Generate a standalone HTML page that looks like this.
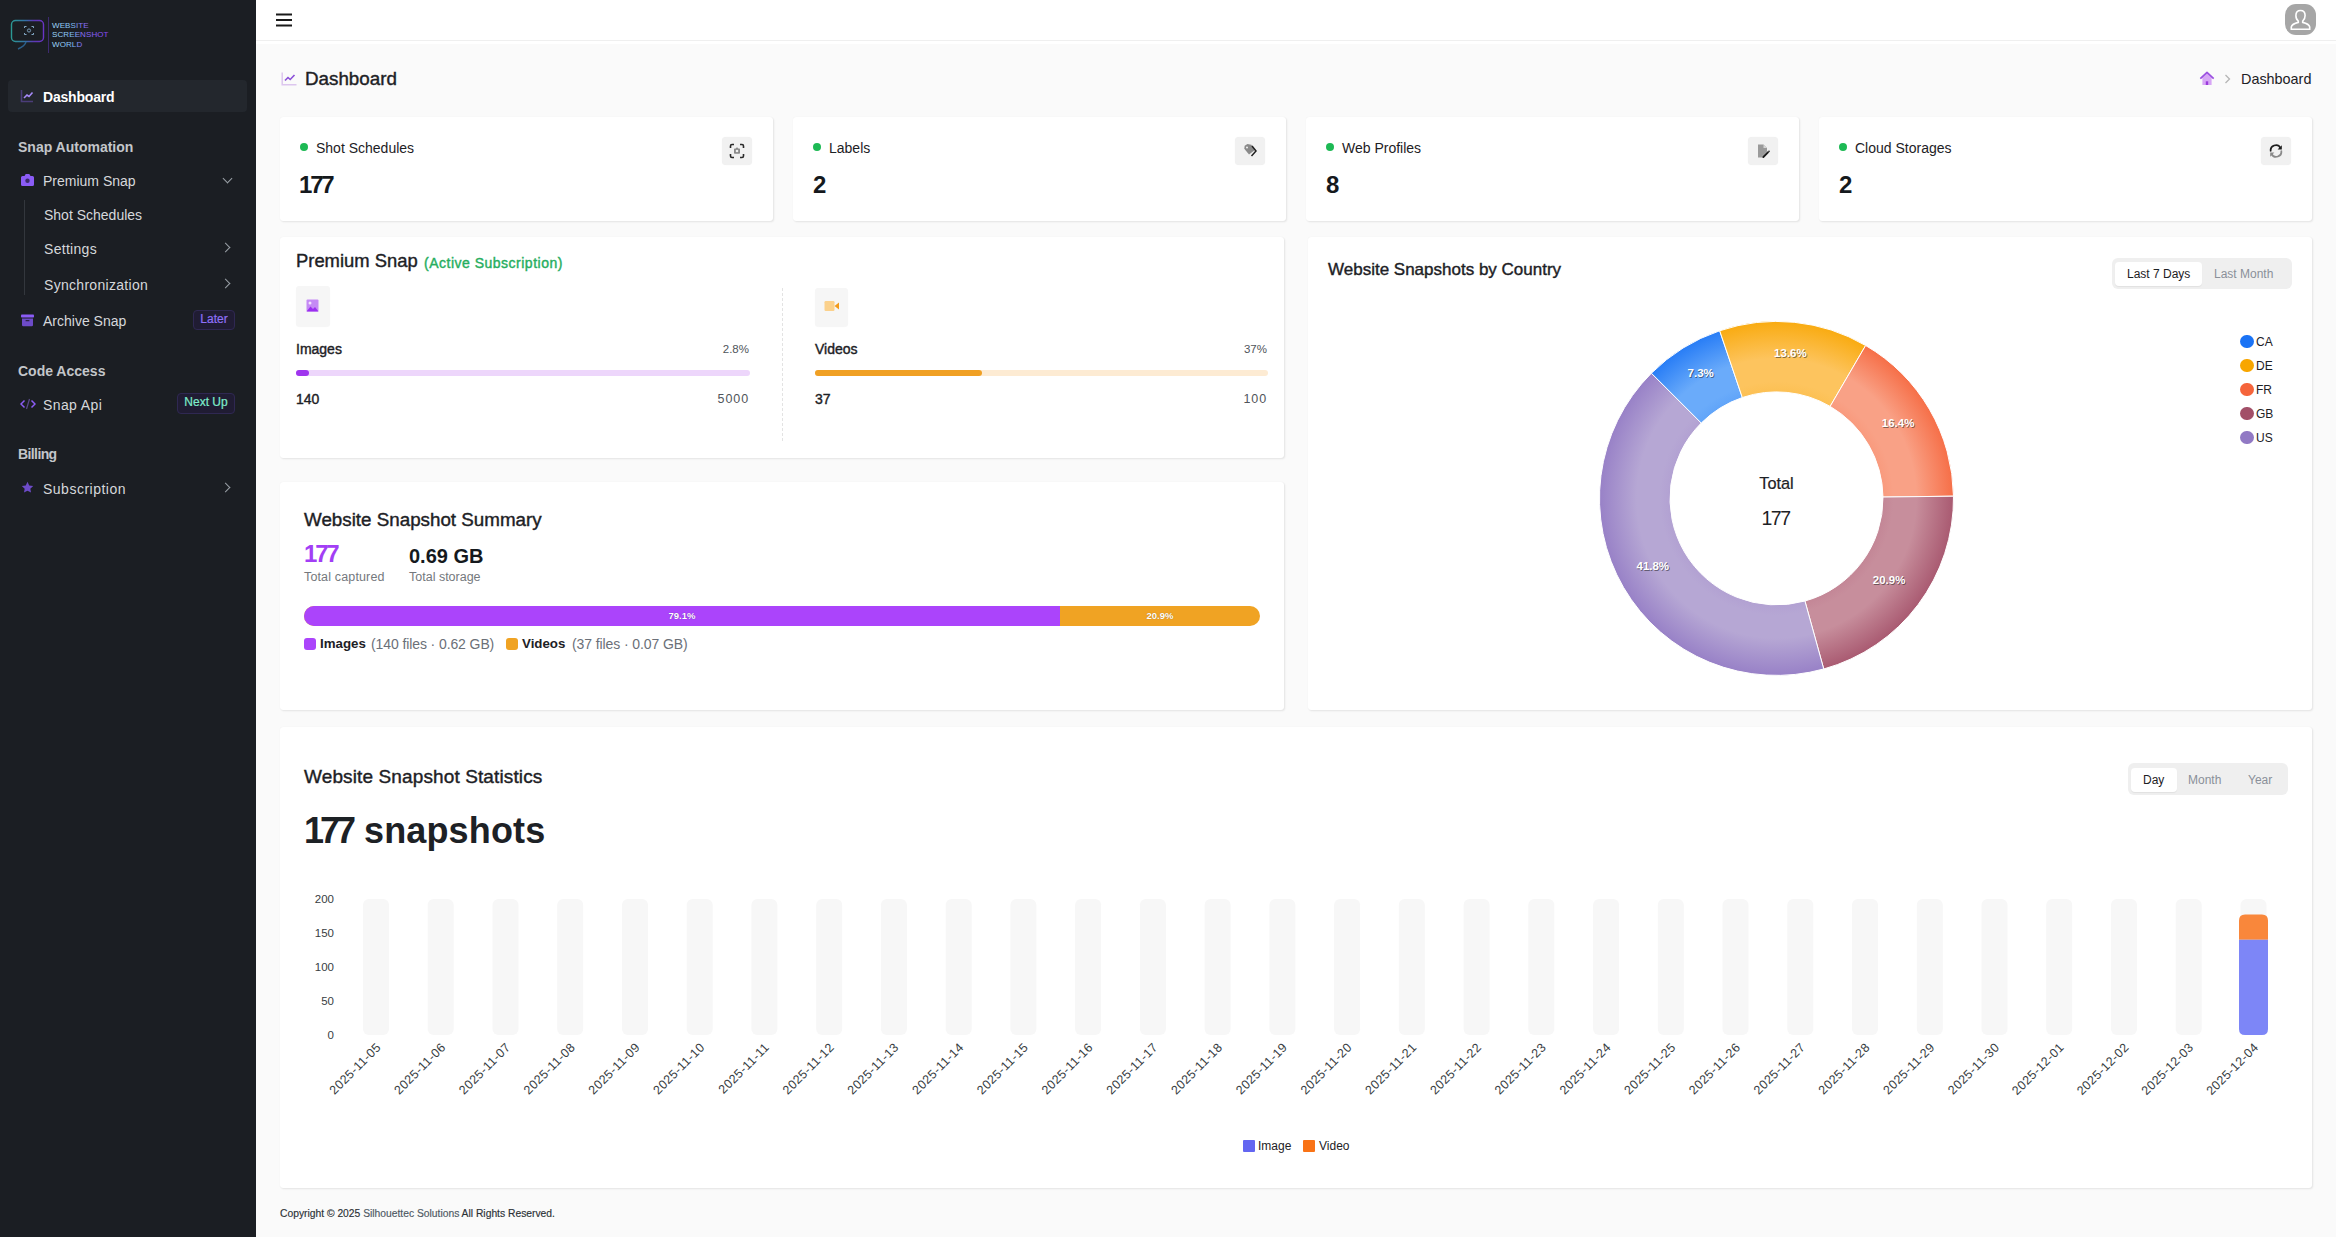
<!DOCTYPE html>
<html><head><meta charset="utf-8">
<style>
*{box-sizing:border-box;margin:0;padding:0}
html,body{width:2336px;height:1237px;overflow:hidden}
body{font-family:"Liberation Sans",sans-serif;background:#fafafa;color:#1f2328;position:relative}
.abs{position:absolute;white-space:nowrap}
.med{-webkit-text-stroke:0.4px currentColor}
#sb{position:absolute;left:0;top:0;width:256px;height:1237px;background:#1b1e23}
#hd{position:absolute;left:256px;top:0;width:2080px;height:44px;background:#fff;border-top:40px solid #fff;box-shadow:inset 0 -3px 0 #fff}
#hdl{position:absolute;left:256px;top:40px;width:2080px;height:1px;background:#efefef}
.card{position:absolute;background:#fff;border-radius:3px;box-shadow:1px 1px 2px rgba(0,0,0,0.09),0 0 1px rgba(0,0,0,0.07)}
.sbi{position:absolute;left:43px;font-size:14px;color:#d6d8db;line-height:16px;white-space:nowrap}
.sbh{position:absolute;left:18px;font-size:14px;color:#c3c6ca;font-weight:700;line-height:16px;white-space:nowrap}
.chev{position:absolute;left:224px;width:7px;height:7px;border-right:1.3px solid #9aa0a6;border-bottom:1.3px solid #9aa0a6}
.badge{position:absolute;height:18px;font-size:12px;line-height:18px;border-radius:4px;text-align:center;white-space:nowrap}
</style></head><body>
<div id="sb">
<svg class="abs" style="left:0;top:0" width="256" height="64" viewBox="0 0 256 64">
 <defs>
  <linearGradient id="lg1" x1="0" y1="0" x2="1" y2="0"><stop offset="0" stop-color="#2fb7b0"/><stop offset="0.45" stop-color="#3b82c6"/><stop offset="0.7" stop-color="#6d3fd8"/><stop offset="1" stop-color="#7c3aed"/></linearGradient>
  <linearGradient id="lg2" gradientUnits="userSpaceOnUse" x1="52" y1="0" x2="108" y2="0"><stop offset="0" stop-color="#a6e2fb"/><stop offset="0.38" stop-color="#7ec0f6"/><stop offset="0.52" stop-color="#8a72f6"/><stop offset="1" stop-color="#8a45f2"/></linearGradient>
 </defs>
 <rect x="11.5" y="20.5" width="32" height="21" rx="4" fill="none" stroke="url(#lg1)" stroke-width="1.4" opacity="0.8"/>
 <path d="M26 42 Q25 46 18 49" fill="none" stroke="#2b5f8a" stroke-width="1.4"/>
 <path d="M24.5 28v-1.5h2M31.5 26.5h2v1.5M33.5 33v1.5h-2M26.5 34.5h-2V33" fill="none" stroke="#8fb8d8" stroke-width="0.9"/>
 <circle cx="29" cy="30.5" r="1.6" fill="none" stroke="#8fb8d8" stroke-width="0.8"/>
 <line x1="48.5" y1="17" x2="48.5" y2="53" stroke="#3d2a70" stroke-width="1"/>
 <text x="52" y="28" font-family="Liberation Sans" font-size="8" fill="url(#lg2)" letter-spacing="0.1">WEBSITE</text>
 <text x="52" y="37.3" font-family="Liberation Sans" font-size="8" fill="url(#lg2)" letter-spacing="0.1">SCREENSHOT</text>
 <text x="52" y="47" font-family="Liberation Sans" font-size="8" fill="url(#lg2)" letter-spacing="0.1">WORLD</text>
</svg>
<div class="abs" style="left:8px;top:80px;width:239px;height:32px;background:#23272d;border-radius:4px"></div>
<svg class="abs" style="left:20px;top:89px" width="14" height="14" viewBox="0 0 14 14"><path d="M1.5 1v11.5H13" fill="none" stroke="#4b3d7a" stroke-width="1.6"/><path d="M4 9l3-3 2 1.5 3.5-4" fill="none" stroke="#a78bfa" stroke-width="1.6"/></svg>
<div class="sbi" style="top:89px;color:#ffffff;font-weight:700;letter-spacing:-0.2px">Dashboard</div>
<div class="sbh" style="top:139px">Snap Automation</div>
<svg class="abs" style="left:20px;top:173px" width="15" height="14" viewBox="0 0 15 14"><path d="M1 4.5q0-1.5 1.5-1.5h2l1.2-2h3.6l1.2 2h2q1.5 0 1.5 1.5v7q0 1.5-1.5 1.5h-10q-1.5 0-1.5-1.5z" fill="#8b5cf6"/><circle cx="7.5" cy="7.8" r="2.2" fill="#3b2a6a"/></svg>
<div class="sbi" style="top:173px">Premium Snap</div>
<div class="chev" style="top:175px;transform:rotate(45deg)"></div>
<div class="abs" style="left:24px;top:200px;width:1px;height:95px;background:#33373d"></div>
<div class="sbi" style="top:207px;left:44px">Shot Schedules</div>
<div class="sbi" style="top:241px;left:44px;letter-spacing:0.3px">Settings</div>
<div class="chev" style="top:244px;left:222px;transform:rotate(-45deg)"></div>
<div class="sbi" style="top:277px;left:44px;letter-spacing:0.3px">Synchronization</div>
<div class="chev" style="top:280px;left:222px;transform:rotate(-45deg)"></div>
<svg class="abs" style="left:21px;top:314px" width="13" height="13" viewBox="0 0 13 13"><rect x="0" y="0.5" width="13" height="3" rx="0.8" fill="#8b5cf6"/><path d="M1 4.5h11v6.5q0 1.2-1.2 1.2H2.2Q1 12.2 1 11z" fill="#6d4bc8"/><rect x="4.5" y="6" width="4" height="1.3" rx="0.6" fill="#2a2145"/></svg>
<div class="sbi" style="top:313px">Archive Snap</div>
<div class="badge" style="left:193px;top:310px;width:42px;height:20px;line-height:16px;background:#201c33;border:1px solid #2f2852;color:#8f70f7;-webkit-text-stroke:0.2px currentColor">Later</div>
<div class="sbh" style="top:363px">Code Access</div>
<svg class="abs" style="left:20px;top:398px" width="16" height="12" viewBox="0 0 16 12"><path d="M4.5 2.5L1 6l3.5 3.5M11.5 2.5L15 6l-3.5 3.5" fill="none" stroke="#8b5cf6" stroke-width="1.5"/><path d="M9.5 1l-3 10" stroke="#5a4a8a" stroke-width="1.2"/></svg>
<div class="sbi" style="top:397px;letter-spacing:0.4px">Snap Api</div>
<div class="badge" style="left:177px;top:393px;width:58px;height:21px;line-height:17px;background:#201c33;border:1px solid #2f2852;color:#7eeccb;-webkit-text-stroke:0.2px currentColor">Next Up</div>
<div class="sbh" style="top:446px;letter-spacing:-0.6px">Billing</div>
<svg class="abs" style="left:21px;top:481px" width="13" height="13" viewBox="0 0 24 24"><path d="M12 1.5l3.2 6.6 7.3 1-5.3 5.1 1.3 7.2L12 18l-6.5 3.4 1.3-7.2L1.5 9.1l7.3-1z" fill="#6d4bc8"/></svg>
<div class="sbi" style="top:481px;letter-spacing:0.5px">Subscription</div>
<div class="chev" style="top:484px;left:222px;transform:rotate(-45deg)"></div>
</div>

<div id="hd"></div><div id="hdl"></div>
<svg class="abs" style="left:276px;top:12px" width="16" height="16" viewBox="0 0 16 16"><path d="M0.5 2.5h15M0.5 8h15M0.5 13.5h15" stroke="#1a1a1a" stroke-width="2" stroke-linecap="round"/></svg>
<svg class="abs" style="left:2284px;top:3px" width="33" height="33" viewBox="0 0 33 33"><rect x="1" y="1" width="31" height="31" rx="11" fill="#a6a6a6"/><path d="M16.5 7.5c2.9 0 4.6 2.2 4.6 5.1 0 2.4-1.1 4.6-2.4 5.6v1.2c3.5 0.8 6.5 2.4 7 4.5v2.4H7.3v-2.4c0.5-2.1 3.5-3.7 7-4.5v-1.2c-1.3-1-2.4-3.2-2.4-5.6 0-2.9 1.7-5.1 4.6-5.1z" fill="none" stroke="#fff" stroke-width="1.6"/></svg>
<svg class="abs" style="left:281px;top:72px" width="16" height="14" viewBox="0 0 16 14"><path d="M1.2 0.5V12.8H15.5" fill="none" stroke="#dcc6ee" stroke-width="1.5"/><path d="M4 8.5l3-3 2.2 2 4.3-4.5" fill="none" stroke="#8a4fd8" stroke-width="1.6"/></svg>
<div class="abs med" style="left:305px;top:69px;font-size:18.8px;line-height:20px;color:#1d2125;font-weight:400">Dashboard</div>
<svg class="abs" style="left:2199px;top:71px" width="16" height="16" viewBox="0 0 16 16"><path d="M8 1.5L1.8 7.3h1.6V14h9.2V7.3h1.6z" fill="#d7a6f5"/><path d="M1.3 7.6L8 1.4l6.7 6.2" fill="none" stroke="#9b51e0" stroke-width="1.6" stroke-linejoin="round"/><rect x="6.8" y="10.3" width="2.4" height="3.7" fill="#9b3bdc"/></svg>
<svg class="abs" style="left:2224px;top:74px" width="7" height="10" viewBox="0 0 7 10"><path d="M1.5 1l4 4-4 4" fill="none" stroke="#b5b5b5" stroke-width="1.3"/></svg>
<div class="abs" style="left:2241px;top:71px;font-size:14.4px;line-height:16px;color:#1d2125">Dashboard</div>

<div class="card" style="left:280px;top:117px;width:493px;height:104px"></div>
<div class="abs" style="left:300px;top:143px;width:8px;height:8px;border-radius:50%;background:#1db954"></div>
<div class="abs" style="left:316px;top:140px;font-size:14px;line-height:16px;color:#1d2125">Shot Schedules</div>
<div class="abs" style="left:299px;top:171px;font-size:24px;line-height:28px;font-weight:700;color:#15191d;letter-spacing:-2.2px">177</div>
<div class="abs" style="left:722px;top:137px;width:30px;height:28px;border-radius:4px;background:#f1f1f1;box-shadow:0 0 1px rgba(0,0,0,0.08)"></div>
<svg class="abs" style="left:729px;top:143px" width="16" height="16" viewBox="0 0 16 16"><path d="M1.5 5V3q0-1.5 1.5-1.5h2M11 1.5h2q1.5 0 1.5 1.5v2M14.5 11v2q0 1.5-1.5 1.5h-2M5 14.5H3q-1.5 0-1.5-1.5v-2" fill="none" stroke="#2a2a2a" stroke-width="1.6"/><path d="M5 6.2q0-0.8 0.8-0.8h1l0.7-1h1l0.7 1h1q0.8 0 0.8 0.8v3.8q0 0.8-0.8 0.8H5.8q-0.8 0-0.8-0.8z" fill="#8a8a8a"/><circle cx="8" cy="8" r="1.3" fill="#f1f1f1"/></svg>
<div class="card" style="left:793px;top:117px;width:493px;height:104px"></div>
<div class="abs" style="left:813px;top:143px;width:8px;height:8px;border-radius:50%;background:#1db954"></div>
<div class="abs" style="left:829px;top:140px;font-size:14px;line-height:16px;color:#1d2125">Labels</div>
<div class="abs" style="left:813px;top:171px;font-size:24px;line-height:28px;font-weight:700;color:#15191d;letter-spacing:-1.5px">2</div>
<div class="abs" style="left:1235px;top:137px;width:30px;height:28px;border-radius:4px;background:#f1f1f1;box-shadow:0 0 1px rgba(0,0,0,0.08)"></div>
<svg class="abs" style="left:1242px;top:143px" width="16" height="16" viewBox="0 0 16 16"><path d="M2 3.5l2.5-2h4l4 5-5 5-5.5-5z" fill="#8a8a8a" transform="rotate(8 8 8)"/><circle cx="5" cy="4.5" r="1" fill="#f1f1f1"/><path d="M10 3l4 5-4.5 5" fill="none" stroke="#1e1e1e" stroke-width="1.5"/></svg>
<div class="card" style="left:1306px;top:117px;width:493px;height:104px"></div>
<div class="abs" style="left:1326px;top:143px;width:8px;height:8px;border-radius:50%;background:#1db954"></div>
<div class="abs" style="left:1342px;top:140px;font-size:14px;line-height:16px;color:#1d2125">Web Profiles</div>
<div class="abs" style="left:1326px;top:171px;font-size:24px;line-height:28px;font-weight:700;color:#15191d;letter-spacing:-1.5px">8</div>
<div class="abs" style="left:1748px;top:137px;width:30px;height:28px;border-radius:4px;background:#f1f1f1;box-shadow:0 0 1px rgba(0,0,0,0.08)"></div>
<svg class="abs" style="left:1755px;top:143px" width="16" height="16" viewBox="0 0 16 16"><path d="M3 1.5h5.5l3.5 3.5v3.5l-4.5 4.5L7 14.5H3z" fill="#9a9a9a"/><path d="M8.5 1.5v3.5h3.5" fill="#d6d6d6"/><path d="M8.3 14l4.6-4.6" stroke="#1a1a1a" stroke-width="2" stroke-linecap="round"/><circle cx="14" cy="8.3" r="0.9" fill="#333"/></svg>
<div class="card" style="left:1819px;top:117px;width:493px;height:104px"></div>
<div class="abs" style="left:1839px;top:143px;width:8px;height:8px;border-radius:50%;background:#1db954"></div>
<div class="abs" style="left:1855px;top:140px;font-size:14px;line-height:16px;color:#1d2125">Cloud Storages</div>
<div class="abs" style="left:1839px;top:171px;font-size:24px;line-height:28px;font-weight:700;color:#15191d;letter-spacing:-1.5px">2</div>
<div class="abs" style="left:2261px;top:137px;width:30px;height:28px;border-radius:4px;background:#f1f1f1;box-shadow:0 0 1px rgba(0,0,0,0.08)"></div>
<svg class="abs" style="left:2268px;top:143px" width="16" height="16" viewBox="0 0 16 16"><path d="M2.8 8.5A5.2 5.2 0 0 1 12.5 5" fill="none" stroke="#1e1e1e" stroke-width="1.7"/><path d="M13.8 2.2v4.2H9.6z" fill="#1e1e1e"/><path d="M13.2 7.5A5.2 5.2 0 0 1 3.5 11" fill="none" stroke="#8a8a8a" stroke-width="1.7"/><path d="M2.2 13.8V9.6h4.2z" fill="#8a8a8a"/></svg>

<div class="card" style="left:280px;top:237px;width:1004px;height:221px"></div>
<div class="abs med" style="left:296px;top:251px;font-size:18.4px;line-height:20px;color:#1d2125">Premium Snap</div>
<div class="abs med" style="left:424px;top:255px;font-size:14px;line-height:16px;color:#27ae60;letter-spacing:0.5px">(Active Subscription)</div>
<div class="abs" style="left:296px;top:286px;width:34px;height:40px;border-radius:3px;background:#f6f6f6;box-shadow:0 1px 1px rgba(0,0,0,0.04)"></div>
<svg class="abs" style="left:306px;top:299px" width="13" height="13" viewBox="0 0 13 13"><rect x="0.5" y="0.5" width="12" height="12" rx="1" fill="#c58af5"/><circle cx="4" cy="4" r="1.5" fill="#f3e3ff"/><path d="M0.5 12.5L4.5 7.5l2.5 2.5 2-2 3.5 4.5z" fill="#9b2ff0"/></svg>
<div class="abs med" style="left:296px;top:341px;font-size:14px;line-height:16px;color:#1d2125">Images</div>
<div class="abs" style="left:649px;width:100px;text-align:right;top:342px;font-size:11.5px;line-height:14px;color:#50555b">2.8%</div>
<div class="abs" style="left:296px;top:370px;width:454px;height:6px;border-radius:3px;background:#edd6fb"></div>
<div class="abs" style="left:296px;top:370px;width:13px;height:6px;border-radius:3px;background:#9f35ee"></div>
<div class="abs med" style="left:296px;top:391px;font-size:14px;line-height:16px;color:#1d2125">140</div>
<div class="abs" style="left:649px;width:100px;text-align:right;top:392px;font-size:12.5px;line-height:14px;color:#50555b;letter-spacing:0.9px">5000</div>
<div class="abs" style="left:782px;top:288px;width:0;height:153px;border-left:1px dashed #e3e3e3"></div>
<div class="abs" style="left:815px;top:288px;width:33px;height:38px;border-radius:3px;background:#f6f6f6;box-shadow:0 1px 1px rgba(0,0,0,0.04)"></div>
<svg class="abs" style="left:824px;top:300px" width="16" height="12" viewBox="0 0 16 12"><rect x="0.5" y="1" width="10" height="10" rx="1.2" fill="#fbd18c"/><path d="M10.5 6l4.5-3.5v7z" fill="#f29b1c"/></svg>
<div class="abs med" style="left:815px;top:341px;font-size:14px;line-height:16px;color:#1d2125">Videos</div>
<div class="abs" style="left:1167px;width:100px;text-align:right;top:342px;font-size:11.5px;line-height:14px;color:#50555b">37%</div>
<div class="abs" style="left:815px;top:370px;width:453px;height:6px;border-radius:3px;background:#fdebd3"></div>
<div class="abs" style="left:815px;top:370px;width:167px;height:6px;border-radius:3px;background:#f0a024"></div>
<div class="abs med" style="left:815px;top:391px;font-size:14px;line-height:16px;color:#1d2125">37</div>
<div class="abs" style="left:1167px;width:100px;text-align:right;top:392px;font-size:12.5px;line-height:14px;color:#50555b;letter-spacing:0.9px">100</div>

<div class="card" style="left:280px;top:482px;width:1004px;height:228px"></div>
<div class="abs med" style="left:304px;top:509px;font-size:18.8px;line-height:22px;color:#1d2125">Website Snapshot Summary</div>
<div class="abs" style="left:304px;top:540px;font-size:24px;line-height:28px;font-weight:700;color:#a23ef5;letter-spacing:-2.2px">177</div>
<div class="abs" style="left:409px;top:544px;font-size:20px;line-height:24px;font-weight:700;color:#15191d">0.69 GB</div>
<div class="abs" style="left:304px;top:570px;font-size:12.5px;line-height:14px;color:#74787d;letter-spacing:0.15px">Total captured</div>
<div class="abs" style="left:409px;top:570px;font-size:12.5px;line-height:14px;color:#74787d">Total storage</div>
<div class="abs" style="left:304px;top:606px;width:956px;height:20px;border-radius:10px;overflow:hidden;background:#f0a323">
 <div style="position:absolute;left:0;top:0;width:756px;height:20px;background:#ab44fb"></div>
 <div style="position:absolute;left:0;top:0;width:756px;height:20px;text-align:center;font-size:9.5px;line-height:20px;font-weight:700;color:#fff;text-shadow:0 0 1px rgba(60,0,120,0.6)">79.1%</div>
 <div style="position:absolute;left:756px;top:0;width:200px;height:20px;text-align:center;font-size:9.5px;line-height:20px;font-weight:700;color:#fff;text-shadow:0 0 1px rgba(120,70,0,0.6)">20.9%</div>
</div>
<div class="abs" style="left:304px;top:638px;width:12px;height:12px;border-radius:3px;background:#ab44fb"></div>
<div class="abs" style="left:320px;top:636px;font-size:13.3px;line-height:16px;font-weight:700;color:#1d2125">Images</div>
<div class="abs" style="left:371px;top:636px;font-size:14px;line-height:16px;color:#6b7078;letter-spacing:-0.1px">(140 files · 0.62 GB)</div>
<div class="abs" style="left:506px;top:638px;width:12px;height:12px;border-radius:3px;background:#f0a323"></div>
<div class="abs" style="left:522px;top:636px;font-size:13.3px;line-height:16px;font-weight:700;color:#1d2125">Videos</div>
<div class="abs" style="left:572px;top:636px;font-size:14px;line-height:16px;color:#6b7078;letter-spacing:-0.1px">(37 files · 0.07 GB)</div>

<div class="card" style="left:1308px;top:237px;width:1004px;height:473px"></div>
<div class="abs med" style="left:1328px;top:260px;font-size:17px;line-height:20px;color:#1d2125">Website Snapshots by Country</div>
<div class="abs" style="left:2112px;top:258px;width:180px;height:31px;border-radius:6px;background:#efefef"></div>
<div class="abs" style="left:2115px;top:262px;width:87px;height:24px;border-radius:4px;background:#fff;box-shadow:0 1px 1px rgba(0,0,0,0.06)"></div>
<div class="abs" style="left:2127px;top:267px;font-size:12px;line-height:14px;color:#1d2125">Last 7 Days</div>
<div class="abs" style="left:2214px;top:267px;font-size:12px;line-height:14px;color:#8a9099">Last Month</div>
<svg class="abs" style="left:1308px;top:237px" width="1004" height="473"><defs><radialGradient id="gCA" gradientUnits="userSpaceOnUse" cx="468.5" cy="261.4" r="177"><stop offset="0.6" stop-color="#60a4f9"/><stop offset="0.66" stop-color="#6aabfa"/><stop offset="0.79" stop-color="#6aabfa"/><stop offset="1" stop-color="#287df6"/></radialGradient><radialGradient id="gDE" gradientUnits="userSpaceOnUse" cx="468.5" cy="261.4" r="177"><stop offset="0.6" stop-color="#fcc053"/><stop offset="0.66" stop-color="#fdc45e"/><stop offset="0.79" stop-color="#fdc45e"/><stop offset="1" stop-color="#f9ab11"/></radialGradient><radialGradient id="gFR" gradientUnits="userSpaceOnUse" cx="468.5" cy="261.4" r="177"><stop offset="0.6" stop-color="#f99a7d"/><stop offset="0.66" stop-color="#f9a186"/><stop offset="0.79" stop-color="#f9a186"/><stop offset="1" stop-color="#f66f48"/></radialGradient><radialGradient id="gGB" gradientUnits="userSpaceOnUse" cx="468.5" cy="261.4" r="177"><stop offset="0.6" stop-color="#c38696"/><stop offset="0.66" stop-color="#c78e9c"/><stop offset="0.79" stop-color="#c78e9c"/><stop offset="1" stop-color="#a95a71"/></radialGradient><radialGradient id="gUS" gradientUnits="userSpaceOnUse" cx="468.5" cy="261.4" r="177"><stop offset="0.6" stop-color="#b2a1d2"/><stop offset="0.66" stop-color="#b6a7d4"/><stop offset="0.79" stop-color="#b6a7d4"/><stop offset="1" stop-color="#9881c7"/></radialGradient></defs><path d="M343.34 136.24A177 177 0 0 1 411.69 93.76L434.32 160.53A106.5 106.5 0 0 0 393.19 186.09Z" fill="url(#gCA)" stroke="#fff" stroke-width="1"/><path d="M411.69 93.76A177 177 0 0 1 557.64 108.49L522.14 169.39A106.5 106.5 0 0 0 434.32 160.53Z" fill="url(#gDE)" stroke="#fff" stroke-width="1"/><path d="M557.64 108.49A177 177 0 0 1 645.49 259.18L574.99 260.06A106.5 106.5 0 0 0 522.14 169.39Z" fill="url(#gFR)" stroke="#fff" stroke-width="1"/><path d="M645.49 259.18A177 177 0 0 1 515.74 431.98L496.93 364.04A106.5 106.5 0 0 0 574.99 260.06Z" fill="url(#gGB)" stroke="#fff" stroke-width="1"/><path d="M515.74 431.98A177 177 0 0 1 343.34 136.24L393.19 186.09A106.5 106.5 0 0 0 496.93 364.04Z" fill="url(#gUS)" stroke="#fff" stroke-width="1"/><text x="393.5" y="140.6" text-anchor="middle" font-family="Liberation Sans" font-size="11.5" font-weight="700" fill="#222" fill-opacity="0.55">7.3%</text><text x="392.7" y="139.8" text-anchor="middle" font-family="Liberation Sans" font-size="11.5" font-weight="700" fill="#fff">7.3%</text><text x="483.2" y="121.2" text-anchor="middle" font-family="Liberation Sans" font-size="11.5" font-weight="700" fill="#222" fill-opacity="0.55">13.6%</text><text x="482.4" y="120.4" text-anchor="middle" font-family="Liberation Sans" font-size="11.5" font-weight="700" fill="#fff">13.6%</text><text x="590.9" y="190.8" text-anchor="middle" font-family="Liberation Sans" font-size="11.5" font-weight="700" fill="#222" fill-opacity="0.55">16.4%</text><text x="590.1" y="190.0" text-anchor="middle" font-family="Liberation Sans" font-size="11.5" font-weight="700" fill="#fff">16.4%</text><text x="581.9" y="347.6" text-anchor="middle" font-family="Liberation Sans" font-size="11.5" font-weight="700" fill="#222" fill-opacity="0.55">20.9%</text><text x="581.1" y="346.8" text-anchor="middle" font-family="Liberation Sans" font-size="11.5" font-weight="700" fill="#fff">20.9%</text><text x="345.6" y="333.6" text-anchor="middle" font-family="Liberation Sans" font-size="11.5" font-weight="700" fill="#222" fill-opacity="0.55">41.8%</text><text x="344.8" y="332.8" text-anchor="middle" font-family="Liberation Sans" font-size="11.5" font-weight="700" fill="#fff">41.8%</text><text x="468.5" y="251.6" text-anchor="middle" font-family="Liberation Sans" font-size="16.3" fill="#1d2125" stroke="#1d2125" stroke-width="0.2">Total</text><text x="467.6" y="287.6" text-anchor="middle" font-family="Liberation Sans" font-size="19.5" fill="#1d2125" letter-spacing="-1.4">177</text></svg>
<div class="abs" style="left:2240px;top:334.9px;width:13.6px;height:13.6px;border-radius:50%;background:#1a73f5"></div><div class="abs" style="left:2256px;top:333.7px;font-size:12px;line-height:16px;color:#1d2125">CA</div><div class="abs" style="left:2240px;top:358.9px;width:13.6px;height:13.6px;border-radius:50%;background:#f8a600"></div><div class="abs" style="left:2256px;top:357.7px;font-size:12px;line-height:16px;color:#1d2125">DE</div><div class="abs" style="left:2240px;top:382.9px;width:13.6px;height:13.6px;border-radius:50%;background:#f5643b"></div><div class="abs" style="left:2256px;top:381.7px;font-size:12px;line-height:16px;color:#1d2125">FR</div><div class="abs" style="left:2240px;top:406.9px;width:13.6px;height:13.6px;border-radius:50%;background:#a24f68"></div><div class="abs" style="left:2256px;top:405.7px;font-size:12px;line-height:16px;color:#1d2125">GB</div><div class="abs" style="left:2240px;top:430.9px;width:13.6px;height:13.6px;border-radius:50%;background:#9179c4"></div><div class="abs" style="left:2256px;top:429.7px;font-size:12px;line-height:16px;color:#1d2125">US</div>

<div class="card" style="left:280px;top:727px;width:2032px;height:461px"></div>
<div class="abs med" style="left:304px;top:766px;font-size:19px;line-height:22px;color:#1d2125;letter-spacing:0.12px">Website Snapshot Statistics</div>
<div class="abs" style="left:304px;top:811px;font-size:36px;line-height:40px;font-weight:700;color:#1d2125;letter-spacing:-4px">177</div><div class="abs" style="left:364px;top:811px;font-size:36px;line-height:40px;font-weight:700;color:#1d2125;letter-spacing:0.15px">snapshots</div>
<div class="abs" style="left:2128px;top:763px;width:160px;height:32px;border-radius:6px;background:#efefef"></div>
<div class="abs" style="left:2131px;top:768px;width:46px;height:24px;border-radius:4px;background:#fff;box-shadow:0 1px 1px rgba(0,0,0,0.06)"></div>
<div class="abs" style="left:2143px;top:773px;font-size:12px;line-height:14px;color:#1d2125">Day</div>
<div class="abs" style="left:2188px;top:773px;font-size:12px;line-height:14px;color:#8a9099">Month</div>
<div class="abs" style="left:2248px;top:773px;font-size:12px;line-height:14px;color:#8a9099">Year</div>
<svg class="abs" style="left:280px;top:727px" width="2032" height="461"><text x="54" y="176.2" text-anchor="end" font-family="Liberation Sans" font-size="11.5" fill="#373d3f">200</text><text x="54" y="210.2" text-anchor="end" font-family="Liberation Sans" font-size="11.5" fill="#373d3f">150</text><text x="54" y="244.2" text-anchor="end" font-family="Liberation Sans" font-size="11.5" fill="#373d3f">100</text><text x="54" y="278.2" text-anchor="end" font-family="Liberation Sans" font-size="11.5" fill="#373d3f">50</text><text x="54" y="312.2" text-anchor="end" font-family="Liberation Sans" font-size="11.5" fill="#373d3f">0</text><rect x="83.0" y="172" width="26" height="136" rx="6" fill="#f7f7f7"/><text x="101.6" y="321.1" text-anchor="end" transform="rotate(-45 101.6 321.1)" font-family="Liberation Sans" font-size="12.5" letter-spacing="0.35" fill="#373d3f">2025-11-05</text><rect x="147.7" y="172" width="26" height="136" rx="6" fill="#f7f7f7"/><text x="166.3" y="321.1" text-anchor="end" transform="rotate(-45 166.3 321.1)" font-family="Liberation Sans" font-size="12.5" letter-spacing="0.35" fill="#373d3f">2025-11-06</text><rect x="212.5" y="172" width="26" height="136" rx="6" fill="#f7f7f7"/><text x="231.1" y="321.1" text-anchor="end" transform="rotate(-45 231.1 321.1)" font-family="Liberation Sans" font-size="12.5" letter-spacing="0.35" fill="#373d3f">2025-11-07</text><rect x="277.2" y="172" width="26" height="136" rx="6" fill="#f7f7f7"/><text x="295.8" y="321.1" text-anchor="end" transform="rotate(-45 295.8 321.1)" font-family="Liberation Sans" font-size="12.5" letter-spacing="0.35" fill="#373d3f">2025-11-08</text><rect x="342.0" y="172" width="26" height="136" rx="6" fill="#f7f7f7"/><text x="360.6" y="321.1" text-anchor="end" transform="rotate(-45 360.6 321.1)" font-family="Liberation Sans" font-size="12.5" letter-spacing="0.35" fill="#373d3f">2025-11-09</text><rect x="406.7" y="172" width="26" height="136" rx="6" fill="#f7f7f7"/><text x="425.3" y="321.1" text-anchor="end" transform="rotate(-45 425.3 321.1)" font-family="Liberation Sans" font-size="12.5" letter-spacing="0.35" fill="#373d3f">2025-11-10</text><rect x="471.4" y="172" width="26" height="136" rx="6" fill="#f7f7f7"/><text x="490.0" y="321.1" text-anchor="end" transform="rotate(-45 490.0 321.1)" font-family="Liberation Sans" font-size="12.5" letter-spacing="0.35" fill="#373d3f">2025-11-11</text><rect x="536.2" y="172" width="26" height="136" rx="6" fill="#f7f7f7"/><text x="554.8" y="321.1" text-anchor="end" transform="rotate(-45 554.8 321.1)" font-family="Liberation Sans" font-size="12.5" letter-spacing="0.35" fill="#373d3f">2025-11-12</text><rect x="600.9" y="172" width="26" height="136" rx="6" fill="#f7f7f7"/><text x="619.5" y="321.1" text-anchor="end" transform="rotate(-45 619.5 321.1)" font-family="Liberation Sans" font-size="12.5" letter-spacing="0.35" fill="#373d3f">2025-11-13</text><rect x="665.7" y="172" width="26" height="136" rx="6" fill="#f7f7f7"/><text x="684.3" y="321.1" text-anchor="end" transform="rotate(-45 684.3 321.1)" font-family="Liberation Sans" font-size="12.5" letter-spacing="0.35" fill="#373d3f">2025-11-14</text><rect x="730.4" y="172" width="26" height="136" rx="6" fill="#f7f7f7"/><text x="749.0" y="321.1" text-anchor="end" transform="rotate(-45 749.0 321.1)" font-family="Liberation Sans" font-size="12.5" letter-spacing="0.35" fill="#373d3f">2025-11-15</text><rect x="795.1" y="172" width="26" height="136" rx="6" fill="#f7f7f7"/><text x="813.7" y="321.1" text-anchor="end" transform="rotate(-45 813.7 321.1)" font-family="Liberation Sans" font-size="12.5" letter-spacing="0.35" fill="#373d3f">2025-11-16</text><rect x="859.9" y="172" width="26" height="136" rx="6" fill="#f7f7f7"/><text x="878.5" y="321.1" text-anchor="end" transform="rotate(-45 878.5 321.1)" font-family="Liberation Sans" font-size="12.5" letter-spacing="0.35" fill="#373d3f">2025-11-17</text><rect x="924.6" y="172" width="26" height="136" rx="6" fill="#f7f7f7"/><text x="943.2" y="321.1" text-anchor="end" transform="rotate(-45 943.2 321.1)" font-family="Liberation Sans" font-size="12.5" letter-spacing="0.35" fill="#373d3f">2025-11-18</text><rect x="989.4" y="172" width="26" height="136" rx="6" fill="#f7f7f7"/><text x="1008.0" y="321.1" text-anchor="end" transform="rotate(-45 1008.0 321.1)" font-family="Liberation Sans" font-size="12.5" letter-spacing="0.35" fill="#373d3f">2025-11-19</text><rect x="1054.1" y="172" width="26" height="136" rx="6" fill="#f7f7f7"/><text x="1072.7" y="321.1" text-anchor="end" transform="rotate(-45 1072.7 321.1)" font-family="Liberation Sans" font-size="12.5" letter-spacing="0.35" fill="#373d3f">2025-11-20</text><rect x="1118.8" y="172" width="26" height="136" rx="6" fill="#f7f7f7"/><text x="1137.4" y="321.1" text-anchor="end" transform="rotate(-45 1137.4 321.1)" font-family="Liberation Sans" font-size="12.5" letter-spacing="0.35" fill="#373d3f">2025-11-21</text><rect x="1183.6" y="172" width="26" height="136" rx="6" fill="#f7f7f7"/><text x="1202.2" y="321.1" text-anchor="end" transform="rotate(-45 1202.2 321.1)" font-family="Liberation Sans" font-size="12.5" letter-spacing="0.35" fill="#373d3f">2025-11-22</text><rect x="1248.3" y="172" width="26" height="136" rx="6" fill="#f7f7f7"/><text x="1266.9" y="321.1" text-anchor="end" transform="rotate(-45 1266.9 321.1)" font-family="Liberation Sans" font-size="12.5" letter-spacing="0.35" fill="#373d3f">2025-11-23</text><rect x="1313.1" y="172" width="26" height="136" rx="6" fill="#f7f7f7"/><text x="1331.7" y="321.1" text-anchor="end" transform="rotate(-45 1331.7 321.1)" font-family="Liberation Sans" font-size="12.5" letter-spacing="0.35" fill="#373d3f">2025-11-24</text><rect x="1377.8" y="172" width="26" height="136" rx="6" fill="#f7f7f7"/><text x="1396.4" y="321.1" text-anchor="end" transform="rotate(-45 1396.4 321.1)" font-family="Liberation Sans" font-size="12.5" letter-spacing="0.35" fill="#373d3f">2025-11-25</text><rect x="1442.5" y="172" width="26" height="136" rx="6" fill="#f7f7f7"/><text x="1461.1" y="321.1" text-anchor="end" transform="rotate(-45 1461.1 321.1)" font-family="Liberation Sans" font-size="12.5" letter-spacing="0.35" fill="#373d3f">2025-11-26</text><rect x="1507.3" y="172" width="26" height="136" rx="6" fill="#f7f7f7"/><text x="1525.9" y="321.1" text-anchor="end" transform="rotate(-45 1525.9 321.1)" font-family="Liberation Sans" font-size="12.5" letter-spacing="0.35" fill="#373d3f">2025-11-27</text><rect x="1572.0" y="172" width="26" height="136" rx="6" fill="#f7f7f7"/><text x="1590.6" y="321.1" text-anchor="end" transform="rotate(-45 1590.6 321.1)" font-family="Liberation Sans" font-size="12.5" letter-spacing="0.35" fill="#373d3f">2025-11-28</text><rect x="1636.8" y="172" width="26" height="136" rx="6" fill="#f7f7f7"/><text x="1655.4" y="321.1" text-anchor="end" transform="rotate(-45 1655.4 321.1)" font-family="Liberation Sans" font-size="12.5" letter-spacing="0.35" fill="#373d3f">2025-11-29</text><rect x="1701.5" y="172" width="26" height="136" rx="6" fill="#f7f7f7"/><text x="1720.1" y="321.1" text-anchor="end" transform="rotate(-45 1720.1 321.1)" font-family="Liberation Sans" font-size="12.5" letter-spacing="0.35" fill="#373d3f">2025-11-30</text><rect x="1766.2" y="172" width="26" height="136" rx="6" fill="#f7f7f7"/><text x="1784.8" y="321.1" text-anchor="end" transform="rotate(-45 1784.8 321.1)" font-family="Liberation Sans" font-size="12.5" letter-spacing="0.35" fill="#373d3f">2025-12-01</text><rect x="1831.0" y="172" width="26" height="136" rx="6" fill="#f7f7f7"/><text x="1849.6" y="321.1" text-anchor="end" transform="rotate(-45 1849.6 321.1)" font-family="Liberation Sans" font-size="12.5" letter-spacing="0.35" fill="#373d3f">2025-12-02</text><rect x="1895.7" y="172" width="26" height="136" rx="6" fill="#f7f7f7"/><text x="1914.3" y="321.1" text-anchor="end" transform="rotate(-45 1914.3 321.1)" font-family="Liberation Sans" font-size="12.5" letter-spacing="0.35" fill="#373d3f">2025-12-03</text><rect x="1960.5" y="172" width="26" height="136" rx="6" fill="#f7f7f7"/><text x="1979.1" y="321.1" text-anchor="end" transform="rotate(-45 1979.1 321.1)" font-family="Liberation Sans" font-size="12.5" letter-spacing="0.35" fill="#373d3f">2025-12-04</text><path d="M1959.0 212.8V193.6q0-6 6-6h17q6 0 6 6V212.8z" fill="#f9873b"/><path d="M1959.0 212.8H1988.0V302.0q0 6-6 6h-17q-6 0-6-6z" fill="#7d86f7"/><rect x="963" y="413" width="12" height="12" fill="#6366f1" rx="1"/><text x="978" y="422.5999999999999" font-family="Liberation Sans" font-size="12" fill="#1d2125">Image</text><rect x="1023" y="413" width="12" height="12" fill="#f97316" rx="1"/><text x="1039" y="422.5999999999999" font-family="Liberation Sans" font-size="12" fill="#1d2125">Video</text></svg>
<div class="abs" style="-webkit-text-stroke:0.15px currentColor;left:280px;top:1207px;font-size:10.3px;line-height:14px;color:#2b3035">Copyright © 2025 <span style="color:#4d5862">Silhouettec Solutions</span> All Rights Reserved.</div>
</body></html>
